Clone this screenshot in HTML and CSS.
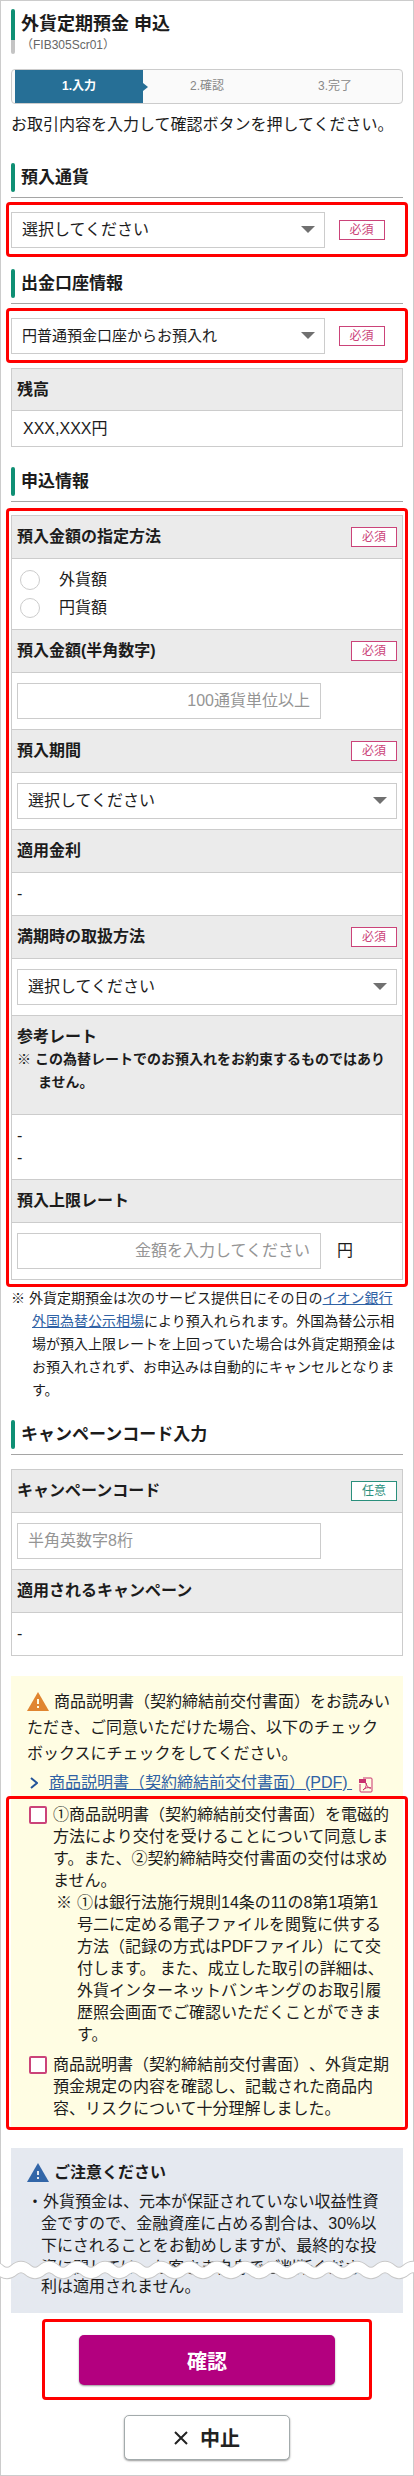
FILE: index.html
```html
<!DOCTYPE html>
<html lang="ja">
<head>
    <meta charset="UTF-8">
    <meta name="viewport" content="width=device-width, initial-scale=1.0">
    <title>外貨定期預金 申込</title>
    <link rel="stylesheet" href="styles.css">
</head>
<body>
    <main class="page">
        <header class="title">
            <div>
                <h1>外貨定期預金 申込</h1>
                <p>（FIB305Scr01）</p>
            </div>
        </header>

        <ol class="steps">
            <li class="current">1.入力</li>
            <li>2.確認</li>
            <li>3.完了</li>
        </ol>
        <p class="intro">お取引内容を入力して確認ボタンを押してください。</p>

        <form id="depositForm">
            <h2 class="first">預入通貨</h2>
            <div class="frame select-row">
                <div class="select">
                    <select id="currency" name="currency" aria-label="預入通貨">
                        <option>選択してください</option>
                    </select>
                </div>
                <span class="badge">必須</span>
            </div>

            <h2>出金口座情報</h2>
            <div class="frame select-row">
                <div class="select">
                    <select id="account" class="small" name="account" aria-label="出金口座情報">
                        <option>円普通預金口座からお預入れ</option>
                    </select>
                </div>
                <span class="badge">必須</span>
            </div>

            <table class="balance">
                <tr><th>残高</th></tr>
                <tr><td>XXX,XXX円</td></tr>
            </table>

            <h2 class="apply">申込情報</h2>
            <div class="frame form-frame">
                <div class="sheet">
                    <div class="head"><span id="methodLabel">預入金額の指定方法</span><span class="badge">必須</span></div>
                    <div class="cell radios" role="radiogroup" aria-labelledby="methodLabel">
                        <label><input type="radio" name="method" value="foreign">外貨額</label>
                        <label><input type="radio" name="method" value="yen">円貨額</label>
                    </div>

                    <div class="head"><label for="amount">預入金額(半角数字)</label><span class="badge">必須</span></div>
                    <div class="cell">
                        <input type="text" id="amount" class="number" name="amount" placeholder="100通貨単位以上">
                    </div>

                    <div class="head"><label for="period">預入期間</label><span class="badge">必須</span></div>
                    <div class="cell">
                        <div class="select">
                            <select id="period" name="period">
                                <option>選択してください</option>
                            </select>
                        </div>
                    </div>

                    <div class="head">適用金利</div>
                    <div class="cell value">-</div>

                    <div class="head"><label for="maturity">満期時の取扱方法</label><span class="badge">必須</span></div>
                    <div class="cell">
                        <div class="select">
                            <select id="maturity" name="maturity">
                                <option>選択してください</option>
                            </select>
                        </div>
                    </div>

                    <div class="head rate-head">
                        <p>参考レート</p>
                        <p class="note">※ この為替レートでのお預入れをお約束するものではありません。</p>
                    </div>
                    <div class="cell rates">
                        <p>-</p>
                        <p>-</p>
                    </div>

                    <div class="head"><label for="limitRate">預入上限レート</label></div>
                    <div class="cell">
                        <input type="text" id="limitRate" class="number" name="limitRate" placeholder="金額を入力してください">
                        <span class="unit">円</span>
                    </div>
                </div>
            </div>
            <p class="note">※ 外貨定期預金は次のサービス提供日にその日の<a href="#">イオン銀行外国為替公示相場</a>により預入れられます。外国為替公示相場が預入上限レートを上回っていた場合は外貨定期預金はお預入れされず、お申込みは自動的にキャンセルとなります。</p>

            <h2 class="campaign">キャンペーンコード入力</h2>
            <div class="sheet">
                <div class="head"><label for="campaignCode">キャンペーンコード</label><span class="badge optional">任意</span></div>
                <div class="cell">
                    <input type="text" id="campaignCode" name="campaignCode" placeholder="半角英数字8桁">
                </div>
                <div class="head">適用されるキャンペーン</div>
                <div class="cell value">-</div>
            </div>

            <section class="agree">
                <p class="agree-lead">
                    <svg class="warn" viewBox="0 0 22 19" aria-hidden="true">
                        <path d="M11 0L22 19H0Z" fill="#e08530"/>
                        <path d="M11 7v5M11 14v2" stroke="#fffde3" stroke-width="2"/>
                    </svg>商品説明書（契約締結前交付書面）をお読みいただき、ご同意いただけた場合、以下のチェックボックスにチェックをしてください。
                </p>
                <p class="pdf">
                    <svg class="chevron" viewBox="0 0 8 12" aria-hidden="true">
                        <path d="M1 1l6 5-6 5" fill="none" stroke="#24549a" stroke-width="2"/>
                    </svg>
                    <a href="#">商品説明書（契約締結前交付書面）(PDF)&nbsp;</a>
                    <svg class="pdf-icon" viewBox="0 0 14 16" aria-hidden="true">
                        <path d="M4 1h8q1 0 1 1v12q0 1-1 1H2q-1 0-1-1V7" fill="none" stroke="#c9326e"/>
                        <path d="M0 2h7v4H0z" fill="#c9326e"/>
                        <path d="M7 6c1 4 3 5 5 5-4-1-6 0-8 2 2-1 4-4 3-7z" fill="none" stroke="#c9326e"/>
                    </svg>
                </p>
                <div class="frame agree-frame">
                    <div class="check">
                        <input type="checkbox" id="agreeDelivery" name="agreeDelivery">
                        <div>
                            <label for="agreeDelivery">①商品説明書（契約締結前交付書面）を電磁的方法により交付を受けることについて同意します。また、②契約締結時交付書面の交付は求めません。</label>
                            <p class="sub-note"><span>※</span><span>①は銀行法施行規則14条の11の8第1項第1号二に定める電子ファイルを閲覧に供する方法（記録の方式はPDFファイル）にて交付します。 また、成立した取引の詳細は、外貨インターネットバンキングのお取引履歴照会画面でご確認いただくことができます。</span></p>
                        </div>
                    </div>
                    <div class="check">
                        <input type="checkbox" id="agreeRisk" name="agreeRisk">
                        <label for="agreeRisk">商品説明書（契約締結前交付書面）、外貨定期預金規定の内容を確認し、記載された商品内容、リスクについて十分理解しました。</label>
                    </div>
                </div>
            </section>

            <section class="caution">
                <h3>
                    <svg class="warn" viewBox="0 0 22 19" aria-hidden="true">
                        <path d="M11 0L22 19H0Z" fill="#3266a8"/>
                        <path d="M11 8v4M11 14v2" stroke="#e5e9f0" stroke-width="2"/>
                    </svg>ご注意ください
                </h3>
                <p class="bullet">・外貨預金は、元本が保証されていない収益性資金ですので、金融資産に占める割合は、30%以下にされることをお勧めしますが、最終的な投資に関しては、お客さま自身でご判断ください。</p>
                <!-- torn edge where the middle of the text is left out -->
                <svg class="wave" viewBox="0 0 414 24" preserveAspectRatio="none" aria-hidden="true">
                    <defs>
                        <path id="waveLine" d="M-28 12q7 6 14 0t14 0t14 0t14 0t14 0t14 0t14 0t14 0t14 0t14 0t14 0t14 0t14 0t14 0t14 0t14 0t14 0t14 0t14 0t14 0t14 0t14 0t14 0t14 0t14 0t14 0t14 0t14 0t14 0t14 0t14 0t14 0t14 0"/>
                    </defs>
                    <use href="#waveLine" class="wave-edge"/>
                    <use href="#waveLine" class="wave-gap"/>
                </svg>
                <p class="rest">利は適用されません。</p>
            </section>

            <div class="frame submit-frame">
                <button type="submit" class="confirm">確認</button>
            </div>
            <button type="button" class="cancel">
                <svg viewBox="0 0 14 14" aria-hidden="true"><path d="M1 1l12 12M13 1L1 13" stroke="#222" stroke-width="2"/></svg>
                中止
            </button>
        </form>
    </main>
</body>
</html>
```
FILE: styles.css
```css
* {
    box-sizing: border-box;
}
body {
    margin: 0;
    background: #fff;
    color: #1c1c1c;
    font-family: "Liberation Sans", "Noto Sans CJK JP", sans-serif;
    font-size: 16px;
    line-height: 22px;
    text-spacing-trim: space-all;
}
h1, h2, h3, p, ol {
    margin: 0;
    padding: 0;
}
a {
    color: #2f62a5;
}
.page {
    border: 1px solid #ccc;
    padding: 8px 10px 15px;
}

/* page title */
.title {
    display: flex;
    gap: 6px;
}
.title::before {
    content: "";
    width: 4px;
    border-radius: 2px;
    background: linear-gradient(#0f8f74 70%, #c4c4c4 70%);
}
.title h1 {
    font-size: 18px;
    line-height: 30px;
}
.title p {
    padding-bottom: 3px;
    color: #666;
    font-size: 12px;
    line-height: 12px;
}

/* steps */
.steps {
    display: flex;
    height: 35px;
    margin-top: 15px;
    padding: 0 3px;
    border: 1px solid #ccc;
    border-radius: 4px;
    background: #fafafa;
    list-style: none;
}
.steps li {
    flex: 1;
    color: #888;
    font-size: 12px;
    line-height: 33px;
    text-align: center;
}
.steps .current {
    position: relative;
    background: #266f96;
    color: #fff;
    font-weight: bold;
}
.steps .current::after {
    content: "";
    position: absolute;
    top: 13px;
    left: 100%;
    border: 4px solid transparent;
    border-left: 5px solid #266f96;
    border-right: 0;
}
.intro {
    margin-top: 9px;
    line-height: 24px;
}

/* section headings */
h2 {
    display: flex;
    gap: 6px;
    margin: 12px 0 4px;
    padding-bottom: 5px;
    border-bottom: 1px solid #a5a5a5;
    font-size: 17px;
    line-height: 29px;
}
h2::before {
    content: "";
    width: 4px;
    border-radius: 2px;
    background: #0f8f74;
}
h2.first {
    margin-top: 26px;
}
h2.apply {
    margin-top: 20px;
}
h2.campaign {
    margin: 18px 0 14px;
}

/* red frames */
.frame {
    margin: 0 -5px;
    padding: 7px 2px 6px;
    border: 3px solid #f00;
    border-radius: 4px;
}
.form-frame {
    margin-top: 6px;
    padding: 4px 2px;
}
.select-row {
    display: flex;
    align-items: center;
    gap: 14px;
}
.select-row .select {
    width: 80%;
}

/* controls */
.select {
    position: relative;
    width: 100%;
}
.select::after {
    content: "";
    position: absolute;
    top: 14px;
    right: 10px;
    border: 7px solid transparent;
    border-top-color: #707070;
    border-bottom: 0;
    pointer-events: none;
}
select, input[type="text"] {
    display: block;
    height: 36px;
    padding: 0 10px;
    border: 1px solid #ccc;
    border-radius: 0;
    background: #fff;
    color: #1c1c1c;
    font: inherit;
}
select {
    width: 100%;
    appearance: none;
}
select.small {
    font-size: 15px;
}
input[type="text"] {
    width: 80%;
}
input.number {
    text-align: right;
}
input::placeholder {
    color: #959595;
}
.badge {
    flex: none;
    width: 46px;
    height: 20px;
    border: 1px solid #cb4379;
    background: #fff;
    color: #cb4379;
    font-size: 12px;
    font-weight: normal;
    line-height: 18px;
    text-align: center;
}
.badge.optional {
    border-color: #2a8f7c;
    color: #2a8f7c;
}

/* tables */
.balance {
    width: 100%;
    margin-top: 5px;
    border: 1px solid #ccc;
    border-spacing: 0;
    text-align: left;
}
.balance th {
    height: 42px;
    padding: 0 5px;
    border-bottom: 1px solid #ccc;
    background: #ebebeb;
}
.balance td {
    height: 35px;
    padding: 0 11px;
}
.sheet {
    border: 1px solid #ccc;
    border-top: 0;
}
.head, .cell {
    padding: 10px 5px;
    border-top: 1px solid #ccc;
}
.head {
    display: flex;
    align-items: center;
    justify-content: space-between;
    background: #ebebeb;
    font-weight: bold;
}
.cell {
    display: flex;
    align-items: center;
    gap: 16px;
}
.head.rate-head {
    display: block;
    padding-bottom: 20px;
}
.cell.rates {
    display: block;
}
.note {
    padding-left: 21px;
    font-size: 14px;
    line-height: 23px;
    text-indent: -21px;
}
.cell.radios {
    flex-direction: column;
    align-items: flex-start;
    gap: 6px;
}
.radios label {
    display: flex;
    align-items: center;
    gap: 19px;
    padding-left: 3px;
}
input[type="radio"] {
    width: 20px;
    height: 20px;
    margin: 0;
    border: 1px solid #ccc;
    border-radius: 50%;
    background: #fff;
    appearance: none;
}
input[type="radio"]:checked {
    border: 6px solid #266f96;
}

/* agreement */
.agree {
    margin-top: 20px;
    padding: 13px 12px 0 16px;
    background: #fffde3;
}
.agree-lead {
    line-height: 26px;
}
.warn {
    width: 22px;
    height: 19px;
    margin-right: 5px;
    vertical-align: -4px;
}
.pdf {
    display: flex;
    align-items: center;
    margin-top: 3px;
    padding-left: 3px;
    line-height: 26px;
}
.chevron {
    width: 8px;
    height: 12px;
    margin-right: 11px;
}
.pdf-icon {
    width: 14px;
    height: 16px;
    margin: 4px 0 0 7px;
}
.agree-frame {
    margin: 0 -17px 0 -21px;
    padding: 5px 14px 7px 20px;
}
.check {
    display: flex;
    gap: 6px;
}
.check + .check {
    margin-top: 8px;
}
input[type="checkbox"] {
    flex: none;
    width: 18px;
    height: 18px;
    margin: 2px 0 0;
    border: 2px solid #cb4379;
    border-radius: 2px;
    background: #fff;
    appearance: none;
}
input[type="checkbox"]:checked {
    background: #cb4379;
}
.sub-note {
    display: flex;
    gap: 5px;
    padding-left: 3px;
}

/* caution */
.caution {
    margin-top: 18px;
    padding: 14px 16px 15px;
    background: #e5e9f0;
}
.caution h3 {
    font-size: 16px;
}
.bullet {
    max-height: 88px;
    margin-top: 7px;
    padding-left: 14px;
    overflow: hidden;
    text-indent: -14px;
}
.wave {
    position: relative;
    display: block;
    width: calc(100% + 54px);
    height: 24px;
    margin: -21px -27px -6px;
    fill: none;
}
.wave-edge {
    stroke: #c8c8c8;
    stroke-width: 12px;
}
.wave-gap {
    stroke: #fff;
    stroke-width: 10px;
}
.rest {
    padding-left: 14px;
}

/* buttons */
.submit-frame {
    width: 330px;
    margin: 6px auto 15px;
    padding: 13px 34px 12px;
}
button {
    display: block;
    font: bold 20px "Liberation Sans", "Noto Sans CJK JP", sans-serif;
    cursor: pointer;
}
.confirm {
    width: 100%;
    height: 50px;
    border: 0;
    border-radius: 5px;
    background: #b3007f;
    box-shadow: 0 1px 2px #999;
    color: #fff;
}
.cancel {
    display: flex;
    align-items: center;
    justify-content: center;
    gap: 12px;
    width: 166px;
    height: 45px;
    margin: 0 auto;
    border: 1px solid #a3abac;
    border-radius: 5px;
    background: #fff;
    box-shadow: 0 1px 2px #999;
    color: #222;
}
.cancel svg {
    width: 14px;
    height: 14px;
}
```
